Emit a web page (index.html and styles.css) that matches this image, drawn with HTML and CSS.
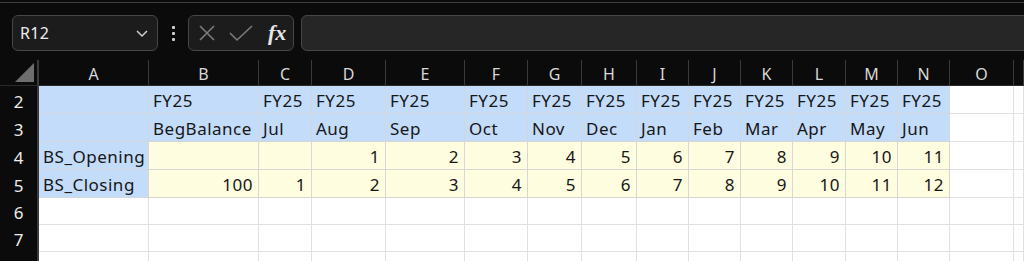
FILE: index.html
```html
<!DOCTYPE html>
<html>
<head>
<meta charset="utf-8">
<link rel="stylesheet" href="styles.css">
</head>
<body>
<div class="app">
  <div class="topline"></div>
  <div class="toolbar">
    <div class="namebox">
      <span class="name">R12</span>
      <svg class="chev" width="14" height="10" viewBox="0 0 14 10"><path d="M2 3 L7 8 L12 3" fill="none" stroke="#cfcfcf" stroke-width="1.5"/></svg>
    </div>
    <div class="kebab"><span></span><span></span><span></span></div>
    <div class="fxbox">
      <svg class="ico" width="18" height="18" viewBox="0 0 18 18"><path d="M2 2 L16 16 M16 2 L2 16" stroke="#7c7c7c" stroke-width="1.6" fill="none"/></svg>
      <svg class="ico" width="24" height="18" viewBox="0 0 24 18"><path d="M1 9 L8 16 L23 2" stroke="#7c7c7c" stroke-width="1.6" fill="none"/></svg>
      <span class="fx">fx</span>
    </div>
    <div class="finput"></div>
  </div>
  <div class="sheet">
    <div class="ch corner"><span class="tri"></span></div>
    <div class="ch">A</div><div class="ch">B</div><div class="ch">C</div><div class="ch">D</div><div class="ch">E</div><div class="ch">F</div><div class="ch">G</div><div class="ch">H</div><div class="ch">I</div><div class="ch">J</div><div class="ch">K</div><div class="ch">L</div><div class="ch">M</div><div class="ch">N</div><div class="ch">O</div><div class="ch last"></div>

    <div class="rh">2</div>
    <div class="c b"></div><div class="c b">FY25</div><div class="c b">FY25</div><div class="c b">FY25</div><div class="c b">FY25</div><div class="c b">FY25</div><div class="c b">FY25</div><div class="c b">FY25</div><div class="c b">FY25</div><div class="c b">FY25</div><div class="c b">FY25</div><div class="c b">FY25</div><div class="c b">FY25</div><div class="c b">FY25</div><div class="c"></div><div class="c last"></div>

    <div class="rh">3</div>
    <div class="c b"></div><div class="c b">BegBalance</div><div class="c b">Jul</div><div class="c b">Aug</div><div class="c b">Sep</div><div class="c b">Oct</div><div class="c b">Nov</div><div class="c b">Dec</div><div class="c b">Jan</div><div class="c b">Feb</div><div class="c b">Mar</div><div class="c b">Apr</div><div class="c b">May</div><div class="c b">Jun</div><div class="c"></div><div class="c last"></div>

    <div class="rh">4</div>
    <div class="c b">BS_Opening</div><div class="c y n"></div><div class="c y n"></div><div class="c y n">1</div><div class="c y n">2</div><div class="c y n">3</div><div class="c y n">4</div><div class="c y n">5</div><div class="c y n">6</div><div class="c y n">7</div><div class="c y n">8</div><div class="c y n">9</div><div class="c y n">10</div><div class="c y n">11</div><div class="c"></div><div class="c last"></div>

    <div class="rh">5</div>
    <div class="c b">BS_Closing</div><div class="c y n">100</div><div class="c y n">1</div><div class="c y n">2</div><div class="c y n">3</div><div class="c y n">4</div><div class="c y n">5</div><div class="c y n">6</div><div class="c y n">7</div><div class="c y n">8</div><div class="c y n">9</div><div class="c y n">10</div><div class="c y n">11</div><div class="c y n">12</div><div class="c"></div><div class="c last"></div>

    <div class="rh">6</div>
    <div class="c"></div><div class="c"></div><div class="c"></div><div class="c"></div><div class="c"></div><div class="c"></div><div class="c"></div><div class="c"></div><div class="c"></div><div class="c"></div><div class="c"></div><div class="c"></div><div class="c"></div><div class="c"></div><div class="c"></div><div class="c last"></div>

    <div class="rh">7</div>
    <div class="c"></div><div class="c"></div><div class="c"></div><div class="c"></div><div class="c"></div><div class="c"></div><div class="c"></div><div class="c"></div><div class="c"></div><div class="c"></div><div class="c"></div><div class="c"></div><div class="c"></div><div class="c"></div><div class="c"></div><div class="c last"></div>

    <div class="rh"></div>
    <div class="c"></div><div class="c"></div><div class="c"></div><div class="c"></div><div class="c"></div><div class="c"></div><div class="c"></div><div class="c"></div><div class="c"></div><div class="c"></div><div class="c"></div><div class="c"></div><div class="c"></div><div class="c"></div><div class="c"></div><div class="c last"></div>
  </div>
</div>
</body>
</html>
```

FILE: styles.css
```css
html, body {
  margin: 0;
  padding: 0;
  background: #0b0b0b;
  overflow: hidden;
}
.app {
  width: 1024px;
  height: 261px;
  overflow: hidden;
  font-family: "Noto Sans", "Open Sans", sans-serif;
}
.topline {
  height: 2px;
  border-bottom: 1px solid #3d3d3d;
}
.toolbar {
  display: flex;
  align-items: center;
  height: 36px;
  margin-top: 12px;
  padding-left: 12px;
}
.namebox {
  box-sizing: border-box;
  width: 146px;
  height: 36px;
  border: 1px solid #474747;
  border-radius: 6px;
  background: #1c1c1c;
  display: flex;
  align-items: center;
  justify-content: space-between;
  padding: 0 8px 0 7px;
}
.name {
  color: #ececec;
  font-size: 16px;
  letter-spacing: 0.3px;
}
.kebab {
  width: 30px;
  display: flex;
  flex-direction: column;
  align-items: center;
  gap: 3px;
}
.kebab span {
  width: 3px;
  height: 3px;
  background: #d0d0d0;
  border-radius: 1px;
}
.fxbox {
  box-sizing: border-box;
  width: 106px;
  height: 36px;
  border: 1px solid #474747;
  border-radius: 6px;
  background: #1c1c1c;
  display: flex;
  align-items: center;
  padding-left: 9px;
  gap: 13px;
}
.fx {
  color: #e6e6e6;
  font-family: "Liberation Serif", "DejaVu Serif", serif;
  font-style: italic;
  font-weight: bold;
  font-size: 22px;
  margin-left: 2px;
}
.finput {
  box-sizing: border-box;
  flex: 1;
  height: 36px;
  margin-left: 7px;
  margin-right: -10px;
  border: 1px solid #474747;
  border-radius: 6px;
  background: #262626;
}
.sheet {
  margin-top: 9px;
  display: grid;
  grid-template-columns: 39px 110px 110px 53px 74px 79px 63px 54px 55px 52px 52px 52px 53px 52px 52px 64px 1fr;
  grid-template-rows: 26px 28px 28px 28px 28px 27px 27px 27px;
}
.ch {
  box-sizing: border-box;
  background: #0b0b0b;
  color: #d8d8d8;
  font-size: 16px;
  display: flex;
  align-items: center;
  justify-content: center;
  border-right: 1px solid #3a3a3a;
  border-bottom: 1px solid #2a2a2a;
  padding-top: 2px;
}
.corner {
  position: relative;
  border-right: 2px solid #3a3a3a;
}
.tri {
  position: absolute;
  right: 3px;
  bottom: 3px;
  width: 0;
  height: 0;
  border-left: 19px solid transparent;
  border-bottom: 19px solid #6e6e6e;
}
.rh {
  box-sizing: border-box;
  background: #0b0b0b;
  color: #ececec;
  font-size: 17px;
  display: flex;
  align-items: center;
  justify-content: center;
  border-right: 2px solid #3a3a3a;
  padding-top: 2px;
}
.c {
  box-sizing: border-box;
  background: #ffffff;
  color: #161616;
  font-size: 17px;
  letter-spacing: 0.5px;
  border-right: 1px solid #e0e0e0;
  border-bottom: 1px solid #e0e0e0;
  display: flex;
  align-items: center;
  padding: 2px 3px 0 4px;
  white-space: nowrap;
  overflow: hidden;
}
.c.b {
  background: #c3dcfa;
  border-color: #d3d6da;
}
.c.y {
  background: #fffddf;
  border-color: #d6d6d2;
}
.c.n {
  justify-content: flex-end;
  padding-right: 5px;
}
```
